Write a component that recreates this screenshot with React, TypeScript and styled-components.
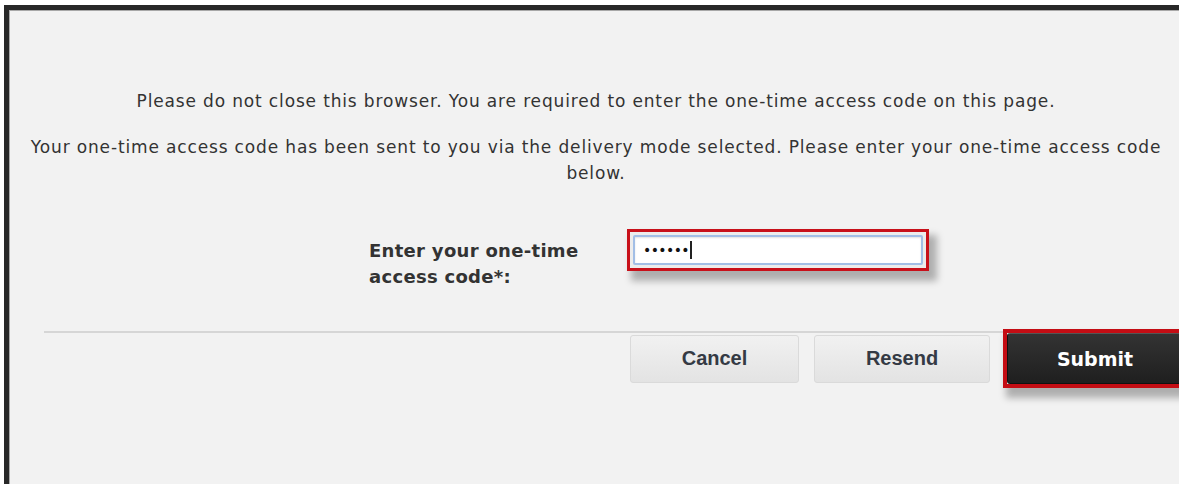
import React from "react";
import styled, { createGlobalStyle } from "styled-components";

const GlobalStyle = createGlobalStyle`
  html, body {
    margin: 0;
    padding: 0;
    background: #ffffff;
    overflow: hidden;
  }
  body {
    font-family: "DejaVu Sans", Verdana, sans-serif;
    color: #333333;
  }
`;

const Frame = styled.div`
  box-sizing: border-box;
  margin: 5px 0 0 4px;
  width: 1179px;
  height: 479px;
  background: #f2f2f2;
  border-top: 5px solid #282828;
  border-left: 5px solid #282828;
  box-shadow: inset 1px 1px 0 #a8a8a8;
  display: flex;
  flex-direction: column;
`;

const Message = styled.p`
  margin: 0;
  padding: 0 20px;
  font-size: 17px;
  line-height: 26px;
  letter-spacing: 0.85px;
  text-align: center;
  color: #333333;

  &:first-child {
    margin-top: 78px;
  }
  & + & {
    margin-top: 20px;
  }
`;

const FormRow = styled.div`
  display: flex;
  align-items: flex-start;
  margin-top: 49px;
  padding-left: 360px;
`;

const Label = styled.label`
  box-sizing: border-box;
  width: 264px;
  padding: 3px 30px 0 0;
  font-weight: bold;
  font-size: 18px;
  line-height: 26px;
  letter-spacing: 0.3px;
  color: #333333;
`;

/* red highlight frame drawn over a control, with its drop shadow */
const CodeField = styled.div`
  position: relative;
  box-sizing: border-box;
  width: 290px;
  height: 30px;
  display: flex;
  align-items: center;
  padding-left: 8px;
  background: #ffffff;
  border: 2px solid #a2bee6;
  border-radius: 2px;
  box-shadow:
    inset 0 1px 2px rgba(0, 0, 0, 0.12),
    0 0 0 4px #ececec;

  &::after {
    content: "";
    position: absolute;
    inset: -8px;
    border: 3px solid #c8101a;
    box-shadow: 6px 8px 7px 2px rgba(0, 0, 0, 0.28);
    pointer-events: none;
  }
`;

const Dots = styled.span`
  font-size: 14px;
  letter-spacing: -0.6px;
  color: #111111;
`;

const Caret = styled.span`
  display: inline-block;
  width: 2px;
  height: 18px;
  margin-left: 1px;
  background: #222222;
`;

const Rule = styled.hr`
  margin: 41px 0 0 35px;
  border: 0;
  height: 2px;
  background: #d6d6d6;
`;

const ButtonRow = styled.div`
  display: flex;
  justify-content: flex-end;
  align-items: center;
  height: 51px;
`;

const Button = styled.button<{ $width: number; $gap?: number }>`
  box-sizing: border-box;
  width: ${(p) => p.$width}px;
  height: 48px;
  margin-left: ${(p) => p.$gap ?? 0}px;
  padding: 0;
  font-family: "Liberation Sans", Arial, sans-serif;
  font-weight: bold;
  font-size: 20px;
  color: #343a44;
  background: linear-gradient(#f1f1f1, #e3e3e3);
  border: 1px solid #dadada;
  border-radius: 3px;
  cursor: pointer;
`;

const SubmitButton = styled.button`
  position: relative;
  box-sizing: border-box;
  width: 176px;
  height: 51px;
  margin-left: 17px;
  padding: 0;
  font-family: "DejaVu Sans", Verdana, sans-serif;
  font-weight: bold;
  font-size: 19px;
  color: #ffffff;
  background: linear-gradient(#333333, #1f1f1f);
  border: 1px solid #111111;
  border-top-color: #555555;
  border-radius: 3px;
  cursor: pointer;

  &::after {
    content: "";
    position: absolute;
    inset: -5px;
    border: 4px solid #c40d14;
    box-shadow: 5px 8px 7px 2px rgba(0, 0, 0, 0.28);
    pointer-events: none;
  }
`;

export default function App() {
  return (
    <>
      <GlobalStyle />
      <Frame>
        <Message>
          Please do not close this browser. You are required to enter the one-time access code on this page.
        </Message>
        <Message>
          Your one-time access code has been sent to you via the delivery mode selected. Please enter your one-time access code below.
        </Message>
        <FormRow>
          <Label htmlFor="otp">Enter your one-time access code*:</Label>
          <CodeField id="otp">
            <Dots>••••••</Dots>
            <Caret />
          </CodeField>
        </FormRow>
        <Rule />
        <ButtonRow>
          <Button $width={169}>Cancel</Button>
          <Button $width={176} $gap={15}>Resend</Button>
          <SubmitButton>Submit</SubmitButton>
        </ButtonRow>
      </Frame>
    </>
  );
}
